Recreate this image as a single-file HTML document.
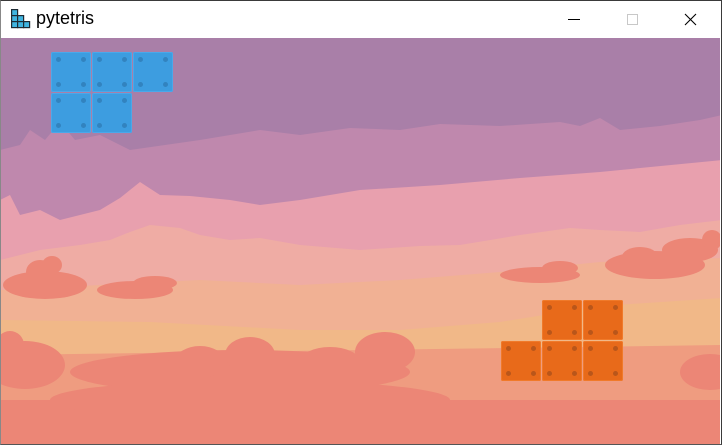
<!DOCTYPE html>
<html><head><meta charset="utf-8"><style>
html,body{margin:0;padding:0;width:722px;height:445px;overflow:hidden;background:#fff}
.win{position:absolute;left:0;top:0;border:1px solid #3a3a3a;border-left-color:#888;border-bottom-color:#555;box-sizing:border-box;width:722px;height:445px;z-index:5;pointer-events:none}
.title{position:absolute;left:36px;top:8px;font:18px "Liberation Sans",sans-serif;color:#000}
.sky{position:absolute;left:1px;top:38px;width:720px;height:406px;overflow:hidden}
.b{position:absolute;width:40px;height:40px;border-radius:2px}
.blue{background:#3d9de0;box-shadow:inset 0 0 0 1px #4aa8ea}
.or{background:#e86a1a;box-shadow:inset 0 0 0 1px #f07a2a}
.b i{position:absolute;width:5px;height:5px;border-radius:50%}
.blue i{background:#3283bf}.or i{background:#b9561a}
</style></head><body>
<div class="win"></div>
<svg style="position:absolute;left:11px;top:9px" width="20" height="20" viewBox="0 0 20 20">
<g fill="#3fb4e0" stroke="#1d2a33" stroke-width="1.2">
<rect x="0.6" y="0.6" width="6" height="6"/><rect x="0.6" y="6.6" width="6" height="6"/><rect x="0.6" y="12.6" width="6" height="6"/>
<rect x="6.6" y="6.6" width="6" height="6"/><rect x="6.6" y="12.6" width="6" height="6"/><rect x="12.6" y="12.6" width="6" height="6"/></g></svg>
<div class="title">pytetris</div>
<svg style="position:absolute;left:560px;top:8px" width="150" height="24">
<line x1="8" y1="11.5" x2="20" y2="11.5" stroke="#000" stroke-width="1"/>
<rect x="67.5" y="6.5" width="10" height="10" fill="none" stroke="#c8c8c8"/>
<path d="M125 6 L136 17 M136 6 L125 17" stroke="#000" stroke-width="1.1"/>
</svg>
<div class="sky">
<svg width="720" height="406" viewBox="0 38 720 406" style="position:absolute;left:-1px;top:0">
<rect x="0" y="38" width="722" height="410" fill="#ec8676"/>
<polygon points="0,38 722,38 722,130 0,160" fill="#a97fa8"/>
<path d="M0,150 L20,145 30,130 45,140 60,122 75,140 100,135 130,150 200,140 260,130 300,135 350,128 400,130 440,124 500,126 560,122 580,126 600,118 620,130 660,126 700,120 722,115 L722,200 0,230Z" fill="#bf88ad"/>
<path d="M0,200 L10,195 20,215 40,210 60,220 100,210 120,198 140,182 160,195 190,196 230,200 260,205 300,200 360,190 440,185 520,178 600,172 722,160 L722,300 0,300Z" fill="#e8a0ae"/>
<path d="M0,260 L40,250 80,245 110,240 130,232 150,225 180,228 200,235 230,240 260,238 300,245 360,250 420,246 460,245 520,235 570,228 600,230 640,232 680,225 722,220 L722,320 0,320Z" fill="#efaca4"/>
<path d="M0,290 L100,285 200,280 300,285 400,280 500,272 600,262 722,258 L722,340 0,340Z" fill="#f1b194"/>
<path d="M0,320 L150,322 300,330 400,330 500,322 600,306 722,298 L722,360 0,360Z" fill="#f1b888"/>
<path d="M0,355 L722,345 L722,400 0,400Z" fill="#ef9c80"/>
<rect x="0" y="400" width="722" height="48" fill="#ec8676"/>
<g fill="#ec8676">
<ellipse cx="45" cy="285" rx="42" ry="14"/><ellipse cx="40" cy="272" rx="14" ry="12"/><ellipse cx="52" cy="265" rx="10" ry="9"/>
<ellipse cx="135" cy="290" rx="38" ry="9"/><ellipse cx="155" cy="283" rx="22" ry="7"/>
<ellipse cx="540" cy="275" rx="40" ry="8"/><ellipse cx="560" cy="268" rx="18" ry="7"/>
<ellipse cx="655" cy="265" rx="50" ry="14"/><ellipse cx="690" cy="250" rx="28" ry="12"/><ellipse cx="640" cy="257" rx="18" ry="10"/><ellipse cx="712" cy="240" rx="10" ry="10"/>
<ellipse cx="240" cy="372" rx="170" ry="22"/><ellipse cx="250" cy="355" rx="25" ry="18"/><ellipse cx="200" cy="362" rx="25" ry="16"/><ellipse cx="385" cy="352" rx="30" ry="20"/><ellipse cx="330" cy="362" rx="30" ry="15"/><ellipse cx="150" cy="370" rx="30" ry="12"/>
<ellipse cx="25" cy="365" rx="40" ry="24"/><ellipse cx="10" cy="345" rx="14" ry="14"/>
<ellipse cx="710" cy="372" rx="30" ry="18"/>
<ellipse cx="250" cy="400" rx="200" ry="20"/>
</g>
</svg>
</div>
<div class="b blue" style="left:51px;top:52px"><i style="left:5px;top:5px"></i><i style="right:5px;top:5px"></i><i style="left:5px;bottom:5px"></i><i style="right:5px;bottom:5px"></i></div>
<div class="b blue" style="left:92px;top:52px"><i style="left:5px;top:5px"></i><i style="right:5px;top:5px"></i><i style="left:5px;bottom:5px"></i><i style="right:5px;bottom:5px"></i></div>
<div class="b blue" style="left:133px;top:52px"><i style="left:5px;top:5px"></i><i style="right:5px;top:5px"></i><i style="left:5px;bottom:5px"></i><i style="right:5px;bottom:5px"></i></div>
<div class="b blue" style="left:51px;top:93px"><i style="left:5px;top:5px"></i><i style="right:5px;top:5px"></i><i style="left:5px;bottom:5px"></i><i style="right:5px;bottom:5px"></i></div>
<div class="b blue" style="left:92px;top:93px"><i style="left:5px;top:5px"></i><i style="right:5px;top:5px"></i><i style="left:5px;bottom:5px"></i><i style="right:5px;bottom:5px"></i></div>
<div class="b or" style="left:542px;top:300px"><i style="left:5px;top:5px"></i><i style="right:5px;top:5px"></i><i style="left:5px;bottom:5px"></i><i style="right:5px;bottom:5px"></i></div>
<div class="b or" style="left:583px;top:300px"><i style="left:5px;top:5px"></i><i style="right:5px;top:5px"></i><i style="left:5px;bottom:5px"></i><i style="right:5px;bottom:5px"></i></div>
<div class="b or" style="left:501px;top:341px"><i style="left:5px;top:5px"></i><i style="right:5px;top:5px"></i><i style="left:5px;bottom:5px"></i><i style="right:5px;bottom:5px"></i></div>
<div class="b or" style="left:542px;top:341px"><i style="left:5px;top:5px"></i><i style="right:5px;top:5px"></i><i style="left:5px;bottom:5px"></i><i style="right:5px;bottom:5px"></i></div>
<div class="b or" style="left:583px;top:341px"><i style="left:5px;top:5px"></i><i style="right:5px;top:5px"></i><i style="left:5px;bottom:5px"></i><i style="right:5px;bottom:5px"></i></div>
</body></html>
